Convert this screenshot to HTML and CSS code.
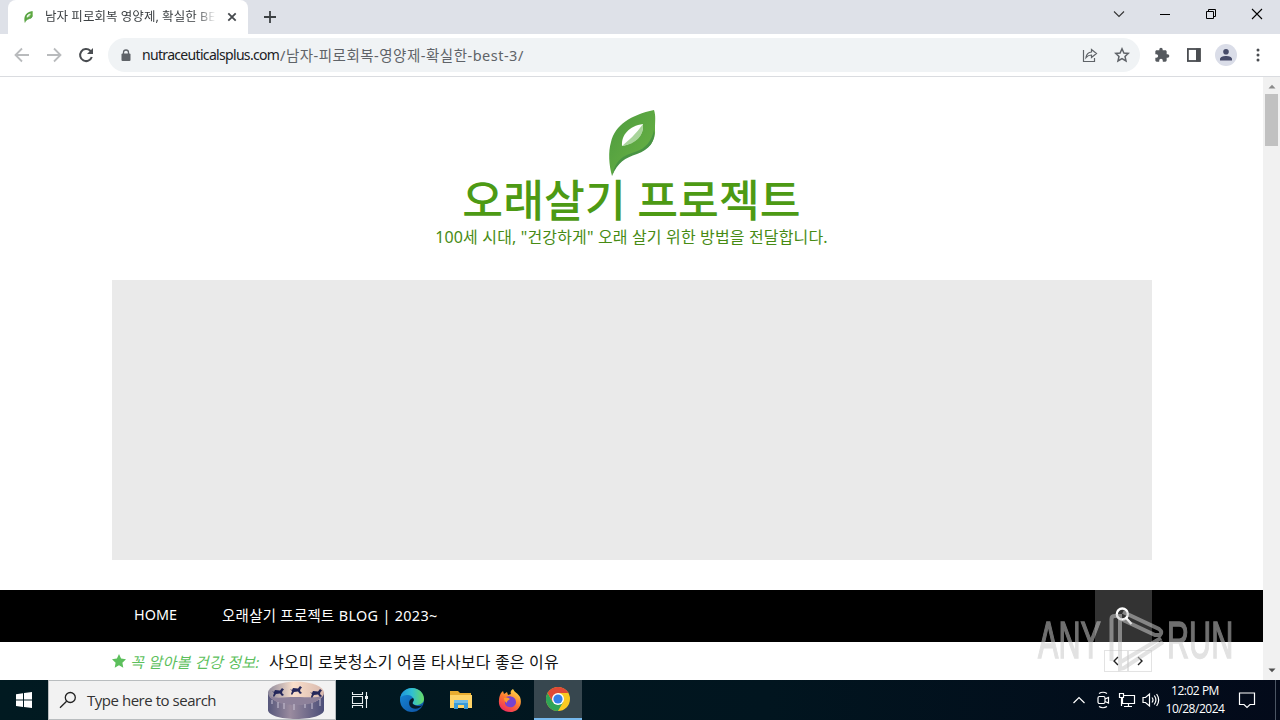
FILE: index.html
```html
<!DOCTYPE html>
<html lang="ko">
<head>
    <meta charset="UTF-8">
    <meta name="viewport" content="width=device-width, initial-scale=1.0">
    <title>남자 피로회복 영양제, 확실한 BEST 3</title>
    <link rel="stylesheet" href="styles.css">
</head>
<body>
    <svg width="0" height="0" class="defs">
        <defs>
            <linearGradient id="leaf-fill" x1="0" y1="0" x2="1" y2="1">
                <stop offset="0" stop-color="#4c9a3f"/>
                <stop offset="1" stop-color="#6db544"/>
            </linearGradient>
            <symbol id="leaf" viewBox="0 0 48 66">
                <path d="M46 0C23 5 7 15 3 32C0 42 1 55 4 66C9 51 17 47 29 43C42 39 48 30 47 19C47 11 48 6 46 0Z" fill="url(#leaf-fill)"/>
                <path d="M4 66C8 49 15 46 27 42C38 39 44 30 46 20C48 31 41 40 29 44C17 48 10 52 4 66Z" fill="#489344"/>
                <path d="M14 36C13 25 21 16 35 14C36 25 28 33 14 36Z" fill="#fff"/>
                <path d="M14 36C20 31 28 24 35 14C36 26 28 34 14 36Z" fill="#a9d49b"/>
            </symbol>
        </defs>
    </svg>

    <div class="tab-strip">
        <div class="tab">
            <svg class="favicon" width="9" height="12"><use href="#leaf"/></svg>
            <span class="tab-title">남자 피로회복 영양제, 확실한 BE</span>
            <svg class="tab-close" width="10" height="10" viewBox="0 0 10 10"><path d="M1.3 1.3L8.7 8.7M8.7 1.3L1.3 8.7" stroke="#45494d" stroke-width="1.8"/></svg>
        </div>
        <svg class="new-tab" width="12" height="12" viewBox="0 0 12 12"><path d="M6 0V12M0 6H12" stroke="#3c4043" stroke-width="1.8"/></svg>
        <div class="window-buttons">
            <svg width="46" height="28" viewBox="0 0 46 28"><path d="M18 11.5L23 16.5L28 11.5" fill="none" stroke="#333" stroke-width="1.1"/></svg>
            <svg width="46" height="28" viewBox="0 0 46 28"><path d="M18 14.5H28" stroke="#000"/></svg>
            <svg width="46" height="28" viewBox="0 0 46 28"><path d="M18.500 11.500H25.500V18.500H18.500ZM20.500 11.500V9.500H27.500V16.500H25.500" fill="none" stroke="#000"/></svg>
            <svg width="46" height="28" viewBox="0 0 46 28"><path d="M18 9L28 19M28 9L18 19" stroke="#000" stroke-width="1.1"/></svg>
        </div>
    </div>

    <div class="toolbar">
        <svg class="nav-icon" width="16" height="16" viewBox="0 0 16 16"><path d="M15 8H2M8 1.500L1.500 8L8 14.500" fill="none" stroke="#b9bbbd" stroke-width="1.8"/></svg>
        <svg class="nav-icon" width="16" height="16" viewBox="0 0 16 16"><path d="M1 8H14M8 1.500L14.500 8L8 14.500" fill="none" stroke="#b9bbbd" stroke-width="1.8"/></svg>
        <svg class="nav-icon" width="16" height="16" viewBox="0 0 16 16"><path d="M13.800 10A6 6 0 1 1 12.300 3.800L13.600 5.200" fill="none" stroke="#4a4d51" stroke-width="2"/><path d="M15 1V7H9Z" fill="#4a4d51"/></svg>
        <div class="address-bar">
            <svg class="lock" width="10" height="13" viewBox="0 0 10 13"><path d="M2.500 5V3.500A2.500 2.500 0 0 1 7.500 3.500V5" fill="none" stroke="#5f6368" stroke-width="1.300"/><rect x="0.500" y="4.500" width="9" height="7.500" rx="1" fill="#5f6368"/></svg>
            <span class="url"><span class="host">nutraceuticalsplus.com</span><span class="path">/남자-피로회복-영양제-확실한-best-3/</span></span>
            <svg class="share" width="16" height="16" viewBox="0 0 16 16"><path d="M1.500 3V14.500H12.500V11M4 10.500C4.500 7 6.500 5.200 9.500 5V2.500L14.500 6.500L9.500 10.500V8C7 8 5.500 8.800 4 10.500Z" fill="none" stroke="#5f6368" stroke-width="1.200"/></svg>
            <svg width="16" height="16" viewBox="0 0 16 16"><path d="M8 1.800L9.900 6L14.300 6.400L11 9.400L12 13.900L8 11.500L4 13.900L5 9.400L1.700 6.400L6.100 6Z" fill="none" stroke="#5f6368" stroke-width="1.500"/></svg>
        </div>
        <div class="extensions">
            <svg width="16" height="16" viewBox="0 0 24 24"><path fill="#55595e" d="M20.500 11H19V7c0-1.100-.9-2-2-2h-4V3.500a2.500 2.500 0 0 0-5 0V5H4c-1.100 0-2 .9-2 2v3.800h1.500a2.700 2.700 0 0 1 0 5.400H2V20c0 1.100.9 2 2 2h3.800v-1.500a2.700 2.700 0 0 1 5.400 0V22H17c1.100 0 2-.9 2-2v-4h1.500a2.500 2.500 0 0 0 0-5z"/></svg>
            <svg width="16" height="16" viewBox="0 0 16 16"><rect x="1.900" y="2" width="12" height="12" fill="none" stroke="#4a4d51" stroke-width="1.800"/><rect x="10" y="1.500" width="4.500" height="13" fill="#4a4d51"/></svg>
            <svg class="avatar" width="22" height="22" viewBox="0 0 22 22"><circle cx="11" cy="11" r="11" fill="#dadde8"/><circle cx="11" cy="7.800" r="2.800" fill="#464b69"/><path d="M5 16.500V15C5 12.700 8.500 11.900 11 11.900S17 12.700 17 15V16.500Z" fill="#464b69"/></svg>
            <svg width="16" height="16" viewBox="0 0 16 16" fill="#4a4d51"><circle cx="8" cy="3" r="1.500"/><circle cx="8" cy="8" r="1.500"/><circle cx="8" cy="13" r="1.500"/></svg>
        </div>
    </div>

    <div class="viewport">
        <div class="page">
            <header class="site-header">
                <svg class="logo" width="48" height="66"><use href="#leaf"/></svg>
                <h1>오래살기 프로젝트</h1>
                <p>100세 시대, "건강하게" 오래 살기 위한 방법을 전달합니다.</p>
            </header>
            <div class="ad"></div>
            <nav class="main-nav">
                <a class="home">HOME</a>
                <a class="blog">오래살기 프로젝트 BLOG | 2023~</a>
                <div class="search-toggle">
                    <svg width="18" height="18" viewBox="0 0 18 18"><circle cx="7.300" cy="7" r="5.500" fill="none" stroke="#fff" stroke-width="2.300"/><path d="M11 11L16.500 17" stroke="#fff" stroke-width="2.300"/></svg>
                </div>
            </nav>
            <div class="ticker">
                <svg class="star" width="14" height="14" viewBox="0 0 14 14"><path d="M7 0L9.100 4.600L14 5.300L10.400 8.700L11.300 13.800L7 11.300L2.700 13.800L3.600 8.700L0 5.300L4.900 4.600Z" fill="#5cbf5c"/></svg>
                <span class="ticker-label">꼭 알아볼 건강 정보:</span>
                <a class="ticker-link">샤오미 로봇청소기 어플 타사보다 좋은 이유</a>
                <div class="ticker-controls">
                    <span><svg width="8" height="10" viewBox="0 0 8 10"><path d="M6 1L2 5L6 9" fill="none" stroke="#222" stroke-width="1.400"/></svg></span>
                    <span><svg width="8" height="10" viewBox="0 0 8 10"><path d="M2 1L6 5L2 9" fill="none" stroke="#222" stroke-width="1.400"/></svg></span>
                </div>
            </div>
        </div>
        <div class="scrollbar">
            <svg width="8" height="5" viewBox="0 0 8 5"><path d="M0.500 4.500L4 0.800L7.500 4.500Z" fill="#8b8b8b"/></svg>
            <div class="thumb"></div>
            <svg class="down" width="8" height="5" viewBox="0 0 8 5"><path d="M0.500 0.500L4 4.200L7.500 0.500Z" fill="#505050"/></svg>
        </div>
    </div>

    <div class="taskbar">
        <div class="start">
            <svg width="16" height="16" viewBox="0 0 16 16" fill="#fff"><path d="M0 2.200L7 1.200V7.600H0ZM8 1L16 0V7.600H8ZM0 8.500H7V14.900L0 13.900ZM8 8.500H16V16L8 15Z"/></svg>
        </div>
        <div class="search">
            <svg width="18" height="18" viewBox="0 0 18 18"><circle cx="11.300" cy="6.500" r="5" fill="none" stroke="#222" stroke-width="1.300"/><path d="M7.600 10.200L1 16.800" stroke="#222" stroke-width="1.300"/></svg>
            <span>Type here to search</span>
            <svg class="highlight" width="58" height="38" viewBox="0 0 58 38">
                <defs>
                    <linearGradient id="drum"><stop offset="0" stop-color="#56577b"/><stop offset=".4" stop-color="#9a8b9f"/><stop offset="1" stop-color="#4b4e78"/></linearGradient>
                    <linearGradient id="rim"><stop offset="0" stop-color="#8e899b"/><stop offset=".45" stop-color="#f9dfcb"/><stop offset="1" stop-color="#d8b8ad"/></linearGradient>
                    <path id="dog" d="M0 3L2 4L3 2L8 2.500L10 0L12 1.500L10.500 3L10 5L12 7L10 8L8 5.500L4 6L2 9L1 8L2 5Z"/>
                </defs>
                <path d="M1 11V29C1 34 13 38 29 38S57 34 57 29V11Z" fill="url(#drum)"/>
                <ellipse cx="29" cy="12" rx="28" ry="11.500" fill="url(#rim)"/>
                <path d="M2 15C8 22 17 24 29 24S50 22 56 15C49 17 41 16 29 16S9 18 2 15Z" fill="#8d819a"/>
                <path d="M5 19V23M11 21V27M17 22V28M27 23V29M38 23V27M45 22V28M53 18V25" stroke="#c9c4d5"/>
                <g fill="#24275a"><use href="#dog" x="5" y="7"/><use href="#dog" x="23" y="5"/><use href="#dog" x="43" y="8"/></g>
            </svg>
        </div>
        <div class="task">
            <svg width="18" height="18" viewBox="0 0 18 18" fill="none" stroke="#e8eef0" stroke-width="1.100"><path d="M1.500 1V3.500H11.500V1M1.500 17V14.500H11.500V17M1.500 5.500H11.500V12.500H1.500ZM15.500 1V17"/><path d="M15.500 5V8" stroke-width="3"/></svg>
        </div>
        <div class="task">
            <svg width="26" height="26" viewBox="0 0 26 26">
                <defs>
                    <linearGradient id="edge-top" x1="0" y1=".4" x2="1" y2=".4"><stop offset="0" stop-color="#1c94dc"/><stop offset=".5" stop-color="#31bfd2"/><stop offset="1" stop-color="#68db62"/></linearGradient>
                    <linearGradient id="edge-low" x1="0" y1="0" x2="1" y2="1"><stop offset="0" stop-color="#168cdb"/><stop offset="1" stop-color="#0e4fa0"/></linearGradient>
                </defs>
                <circle cx="13" cy="13" r="12" fill="url(#edge-low)"/>
                <path d="M1 12C2 5 7 1 13 1C20 1 25 6 25 12C25 16 21 18 17 18C14 18 13 17 14 15C16 12 13 8 9 8C5 8 2 9 1 12Z" fill="url(#edge-top)"/>
                <path d="M14 11C9 12 9 19 13 21C17 23 21 21 24 18C21 20 16 19 14 17C13 16 14 15 14.500 14C15 13 15 12 14 11Z" fill="#071b2a"/>
            </svg>
        </div>
        <div class="task">
            <svg width="24" height="22" viewBox="0 0 24 22"><path d="M1 2H9L11 4H22V19H1Z" fill="#e9ad30"/><path d="M1 6H23V19H1Z" fill="#ffd467"/><path d="M5 20V12H19V20H15V16H9V20Z" fill="#389ad8"/><path d="M5 11H19V14H5Z" fill="#72bce6"/></svg>
        </div>
        <div class="task">
            <svg width="24" height="25" viewBox="0 0 24 25">
                <defs><linearGradient id="fox" x1=".8" y1="0" x2=".2" y2="1"><stop offset="0" stop-color="#ffe14a"/><stop offset=".5" stop-color="#ff782e"/><stop offset="1" stop-color="#ed2363"/></linearGradient></defs>
                <path d="M3 5L5 3L6 6L9 4L10 7L13 6C12 4 13 2 15 1C17 5 20 5 22 9C25 17 20 24 12 24C5 24 0 19 1 12C1 9 2 7 3 5Z" fill="url(#fox)"/>
                <path d="M8 9C12 7 18 9 18 14C18 18 14 20 11 19C7 18 6 15 8 12L11 11Z" fill="#7743cf"/>
                <path d="M6 10C8 10 10 9 12 11L10 12.500C9 13 9 14 9 15C7 14 6 12 6 10Z" fill="#ff9b2c"/>
            </svg>
        </div>
        <div class="task active">
            <svg width="24" height="24" viewBox="0 0 24 24"><circle cx="12" cy="12" r="12" fill="#f9c921"/><path d="M1.600 6A12 12 0 0 0 12 24L17.200 15L12 12L6.800 15Z" fill="#2fa456"/><path d="M1.600 6A12 12 0 0 1 22.400 6H12L6.800 15Z" fill="#df4937"/><circle cx="12" cy="12" r="6" fill="#fff"/><circle cx="12" cy="12" r="4.600" fill="#347fe8"/></svg>
        </div>
        <div class="tray">
            <svg width="14" height="16" viewBox="0 0 14 16"><path d="M1.500 11L7 5.500L12.500 11" fill="none" stroke="#fff" stroke-width="1.200"/></svg>
            <svg class="cam" width="14" height="18" viewBox="0 0 14 18" fill="none" stroke="#fff" stroke-width="1.200"><rect x="2" y="5.500" width="7" height="7" rx="1.500"/><path d="M9 8L12.500 6.500V12L9 10.500M3 2.500Q7 0 11 2.500M3 15.500Q7 18 11 15.500"/></svg>
            <svg class="net" width="18" height="16" viewBox="0 0 18 16" fill="none" stroke="#fff" stroke-width="1.200"><path d="M5 3.500H16.500V11.500H4.500V6M10.500 11.500V14.500M6 14.500H14M1.500 1.500H5.500V5.500H1.500ZM3.500 5.500V14"/></svg>
            <svg class="sound" width="18" height="16" viewBox="0 0 18 16" fill="none" stroke="#fff" stroke-width="1.200"><path d="M1 5.500H3.500L7.500 2V14L3.500 10.500H1ZM10 5.500Q12 8 10 10.500M12.300 3.500Q15.500 8 12.300 12.500M14.600 2Q18.800 8 14.600 14"/></svg>
            <div class="clock"><span>12:02 PM</span><span>10/28/2024</span></div>
            <svg class="notice" width="18" height="18" viewBox="0 0 18 18"><path d="M1.500 2H16.500V13.500H12L9 16.500L6 13.500H1.500Z" fill="none" stroke="#fff" stroke-width="1.200"/></svg>
            <div class="peek"></div>
        </div>
    </div>

    <div class="watermark">
        <span class="any">ANY</span>
        <svg width="60" height="66" viewBox="0 0 60 66" fill="none"><path d="M4.500 54V12Q4.500 9 8 9H13V51M16 5L52 22Q56 25 53 28L48 28L16 13M12 56L54 31M13 51V62L17 61L56 35" stroke="#cbcbcb" stroke-width="4"/></svg>
        <span class="run">RUN</span>
    </div>
</body>
</html>
```
FILE: styles.css
```css
* {
    box-sizing: border-box;
}
body {
    margin: 0;
    width: 1280px;
    height: 720px;
    overflow: hidden;
    display: flex;
    flex-direction: column;
    position: relative;
    background: #fff;
    font-family: "Noto Sans", "Noto Sans CJK KR", sans-serif;
}
svg {
    display: block;
    flex-shrink: 0;
}
span, a {
    white-space: nowrap;
}
.defs {
    position: absolute;
}

/* browser chrome */
.tab-strip {
    height: 34px;
    flex-shrink: 0;
    background: #dee1e8;
    display: flex;
    align-items: flex-start;
    padding-left: 8px;
}
.tab {
    width: 240px;
    height: 34px;
    background: #fff;
    border-radius: 8px 8px 0 0;
    display: flex;
    align-items: center;
    padding-left: 16px;
}
.favicon {
    margin-right: 12px;
}
.tab-title {
    width: 171px;
    margin-top: -3px;
    overflow: hidden;
    font-size: 12.5px;
    letter-spacing: 0.04px;
    color: #3c4043;
    -webkit-mask-image: linear-gradient(to right, #000 88%, transparent);
}
.tab-close {
    margin-left: 11px;
}
.new-tab {
    margin: 11px 0 0 16px;
}
.window-buttons {
    display: flex;
    margin-left: auto;
}
.toolbar {
    height: 43px;
    flex-shrink: 0;
    display: flex;
    align-items: center;
    padding-left: 14px;
    border-bottom: 1px solid #dadce0;
}
.nav-icon {
    margin-right: 16px;
}
.address-bar {
    width: 1032px;
    height: 34px;
    margin-left: -2px;
    border-radius: 17px;
    background: #f0f3f5;
    display: flex;
    align-items: center;
    padding: 0 10px 0 13px;
}
.url {
    margin: -2px auto 0 11px;
    font-size: 14px;
    display: flex;
    align-items: center;
}
.host {
    color: #202124;
    width: 138px;
    letter-spacing: -0.68px;
}
.path {
    color: #5f6368;
    font-size: 14.5px;
    letter-spacing: 0.5px;
}
.share {
    margin-right: 16px;
}
.extensions {
    display: flex;
    align-items: center;
    gap: 16px;
    margin-left: 14px;
}
.avatar {
    margin: 0 -3px;
}

/* page */
.viewport {
    height: 603px;
    flex-shrink: 0;
    display: flex;
}
.page {
    width: 1263px;
}
.site-header {
    height: 203px;
    padding-top: 33px;
    display: flex;
    flex-direction: column;
    align-items: center;
    color: #4d9a14;
}
.site-header h1 {
    margin: 0;
    font-size: 44.4px;
    font-weight: 500;
    line-height: 48px;
    padding-bottom: 2px;
    white-space: nowrap;
}
.site-header p {
    margin: 0;
    font-size: 16px;
    line-height: 22px;
    letter-spacing: 0.15px;
    color: #478b14;
    white-space: nowrap;
}
.ad {
    width: 1040px;
    height: 280px;
    margin: 0 0 30px 112px;
    background: #eaeaea;
}
.main-nav {
    height: 52px;
    background: #000;
    color: #fff;
    font-size: 14.4px;
    display: flex;
    align-items: center;
    padding: 0 111px 0 134px;
}
.main-nav a {
    margin-top: -4px;
}
.home {
    width: 88px;
}
.blog {
    letter-spacing: 0.33px;
}
.search-toggle {
    width: 57px;
    height: 52px;
    margin-left: auto;
    background: #333;
    display: flex;
    align-items: center;
    justify-content: center;
}
.ticker {
    height: 38px;
    display: flex;
    align-items: center;
    padding: 0 111px 0 112px;
    font-size: 15px;
}
.ticker-label {
    width: 139px;
    padding-left: 4px;
    color: #5cbf5c;
    font-style: italic;
    letter-spacing: 0.3px;
}
.ticker-link {
    margin-left: 4px;
    font-size: 16px;
    letter-spacing: 0.18px;
    color: #111;
}
.ticker-controls {
    display: flex;
    margin: 0 0 0 auto;
}
.ticker-controls span {
    width: 24px;
    height: 22px;
    border: 1px solid #e3e3e3;
    display: flex;
    align-items: center;
    justify-content: center;
}
.scrollbar {
    width: 17px;
    background: #f1f1f1;
    display: flex;
    flex-direction: column;
    align-items: center;
    padding: 7px 0;
}
.thumb {
    width: 13px;
    height: 52px;
    margin-top: 5px;
    background: #c1c1c1;
}
.down {
    margin-top: auto;
}

/* taskbar */
.taskbar {
    height: 40px;
    flex-shrink: 0;
    display: flex;
    background: linear-gradient(to right, #011a21, #01151f 60%, #030a1a);
    color: #fff;
}
.start, .task {
    width: 49px;
    height: 40px;
    display: flex;
    align-items: center;
    justify-content: center;
}
.start {
    width: 48px;
}
.search {
    width: 288px;
    border: 1px solid #b9bdbf;
    background: #f2f2f2;
    color: #333;
    display: flex;
    align-items: center;
    padding-left: 10px;
    font-family: "Open Sans", sans-serif;
    font-size: 15px;
}
.search span {
    width: 180px;
    margin-left: 10px;
    letter-spacing: -0.47px;
}
.search + .task {
    width: 51px;
    padding-right: 3px;
}
.task.active {
    width: 48px;
    background: #37474f;
    border-bottom: 2px solid #76b9ed;
}
.tray {
    margin-left: auto;
    display: flex;
    align-items: center;
}
.cam {
    margin-left: 10px;
}
.net {
    margin-left: 8px;
}
.sound {
    margin-left: 6px;
}
.clock {
    width: 60px;
    margin-left: 5px;
    display: flex;
    flex-direction: column;
    align-items: center;
    font-family: "Open Sans", sans-serif;
    font-size: 12px;
    line-height: 18px;
    letter-spacing: -0.48px;
}
.notice {
    margin-left: 13px;
}
.peek {
    width: 5px;
    height: 40px;
    margin-left: 19px;
    border-left: 1px solid #4b5563;
}

/* translucent watermark over the page corner */
.watermark {
    position: absolute;
    left: 1038px;
    top: 607px;
    width: 194px;
    height: 66px;
    display: flex;
    opacity: 0.55;
    font-family: "Liberation Sans", sans-serif;
    font-size: 51px;
    line-height: 68px;
    color: #cbcbcb;
    -webkit-text-stroke: 1.5px #cbcbcb;
}
.watermark span {
    width: 69px;
    transform: scaleX(0.6);
    transform-origin: left;
}
.watermark .run {
    width: 62px;
}
```
